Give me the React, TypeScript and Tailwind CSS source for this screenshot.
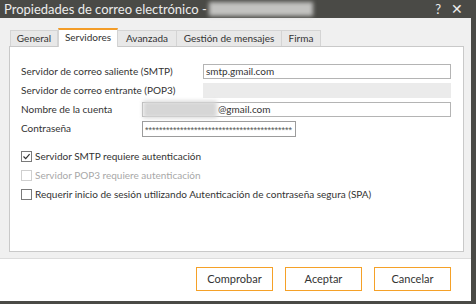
export default function App() {
  const font = { fontFamily: 'Lato, "Open Sans", sans-serif' };

  return (
    <div className="w-[476px] h-[304px] flex flex-col bg-white border-r-[5px] border-b-[3px] border-[#4a4a46] overflow-hidden" style={font}>
      {/* barra de titulo */}
      <div className="h-[18px] shrink-0 bg-[#4a4a46] flex items-center pl-[4px] pr-[8px] text-[#ececec]">
        <span className="text-[13px] leading-none">Propiedades de correo electrónico -</span>
        <div className="ml-[2px] w-[104px] h-[14px] bg-[#c2c2c0] blur-[2px]"></div>
        <div className="ml-auto flex items-center gap-[10px] text-[13px] leading-none">
          <span>?</span>
          <span className="text-[14px]">✕</span>
        </div>
      </div>

      {/* cuerpo gris */}
      <div className="h-[241px] shrink-0 bg-[#f0f0f0] border-b border-[#dcdcdc] pl-[9px] pr-[7px] pt-[10px]">
        {/* pestañas */}
        <div className="flex items-end h-[18px] text-[10px] text-[#333]">
          <div className="ml-[1px] w-[48px] h-[16px] bg-[#e8e8e8] border border-b-0 border-[#d4d4d4] flex items-center justify-center">General</div>
          <div className="w-[60px] h-[19px] bg-white border-t-2 border-x border-t-[#f39c27] border-x-[#d4d4d4] flex items-center justify-center -mb-px relative z-10 pb-[2px]">Servidores</div>
          <div className="w-[59px] h-[16px] bg-[#e8e8e8] border border-b-0 border-l-0 border-[#d4d4d4] flex items-center justify-center">Avanzada</div>
          <div className="w-[105px] h-[16px] bg-[#e8e8e8] border border-b-0 border-l-0 border-[#d4d4d4] flex items-center justify-center">Gestión de mensajes</div>
          <div className="w-[39px] h-[16px] bg-[#e8e8e8] border border-b-0 border-l-0 border-[#d4d4d4] flex items-center justify-center">Firma</div>
        </div>

        {/* panel */}
        <div className="h-[206px] bg-white border border-[#c9c9c9] pl-[11px] pt-[17px] text-[10px] text-[#333]">
          <div className="flex flex-col gap-[4px]">
            <div className="flex items-center h-[15px]">
              <span className="w-[182px]">Servidor de correo saliente (SMTP)</span>
              <div className="w-[248px] h-[15px] border border-[#b4b4b4] flex items-center px-[2px]">smtp.gmail.com</div>
            </div>
            <div className="flex items-center h-[15px]">
              <span className="w-[182px]">Servidor de correo entrante (POP3)</span>
              <div className="w-[248px] h-[15px] bg-[#ebebeb]"></div>
            </div>
            <div className="flex items-center h-[15px]">
              <span className="w-[121px]">Nombre de la cuenta</span>
              <div className="w-[309px] h-[15px] border border-[#b4b4b4] flex items-center relative">
                <div className="w-[74px] h-[17px] -my-px bg-[#d6d6d6] blur-[2px]"></div>
                <span className="pl-px">@gmail.com</span>
              </div>
            </div>
            <div className="flex items-center h-[15px]">
              <span className="w-[121px]">Contraseña</span>
              <div
                className="w-[154px] h-[16px] border border-[#9c9c9c] flex items-center px-[2px] pt-[3px] overflow-hidden text-[9px] leading-none text-[#555]"
                style={{ fontFamily: '"Liberation Sans", Arial, sans-serif' }}
              >
                ******************************************
              </div>
            </div>
          </div>

          <div className="flex flex-col gap-[7px] mt-[14px]">
            <label className="flex items-center gap-[3px] h-[12px]">
              <span className="w-[11px] h-[11px] border border-[#7a7a7a] bg-white flex items-center justify-center">
                <svg width="9" height="9" viewBox="0 0 9 9">
                  <path d="M1.5 4.5 L3.7 6.7 L7.6 2.2" fill="none" stroke="#333" strokeWidth="1.2" />
                </svg>
              </span>
              <span>Servidor SMTP requiere autenticación</span>
            </label>
            <label className="flex items-center gap-[3px] h-[12px] text-[#a8a8a8]">
              <span className="w-[11px] h-[11px] border border-[#cfcfcf] bg-white"></span>
              <span>Servidor POP3 requiere autenticación</span>
            </label>
            <label className="flex items-center gap-[3px] h-[12px]">
              <span className="w-[11px] h-[11px] border border-[#7a7a7a] bg-white"></span>
              <span>Requerir inicio de sesión utilizando Autenticación de contraseña segura (SPA)</span>
            </label>
          </div>
        </div>
      </div>

      {/* botones */}
      <div className="flex-1 flex items-start justify-end pt-[8px] pr-[20px] gap-[12px] text-[11px] text-[#333]">
        <button className="w-[77px] h-[24px] border border-[#f5a128] bg-white">Comprobar</button>
        <button className="w-[77px] h-[24px] border border-[#f5a128] bg-white">Aceptar</button>
        <button className="w-[77px] h-[24px] border border-[#f5a128] bg-white">Cancelar</button>
      </div>
    </div>
  );
}
